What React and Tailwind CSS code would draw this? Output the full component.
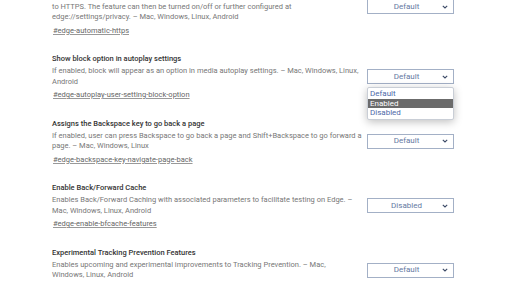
import { useState } from 'react'

const flags = [
  {
    title: 'Automatic HTTPS',
    desc: 'Automatically switch to more secure connections by upgrading navigations\nto HTTPS. The feature can then be turned on/off or further configured at edge://settings/privacy. – Mac, Windows, Linux, Android',
    tag: '#edge-automatic-https',
    value: 'Default',
  },
  {
    title: 'Show block option in autoplay settings',
    desc: 'If enabled, block will appear as an option in media autoplay settings. – Mac, Windows, Linux, Android',
    tag: '#edge-autoplay-user-setting-block-option',
    value: 'Default',
    open: true,
  },
  {
    title: 'Assigns the Backspace key to go back a page',
    desc: 'If enabled, user can press Backspace to go back a page and Shift+Backspace to go forward a page. – Mac, Windows, Linux',
    tag: '#edge-backspace-key-navigate-page-back',
    value: 'Default',
  },
  {
    title: 'Enable Back/Forward Cache',
    desc: 'Enables Back/Forward Caching with associated parameters to facilitate testing on Edge. – Mac, Windows, Linux, Android',
    tag: '#edge-enable-bfcache-features',
    value: 'Disabled',
  },
  {
    title: 'Experimental Tracking Prevention Features',
    desc: 'Enables upcoming and experimental improvements to Tracking Prevention. – Mac,\nWindows, Linux, Android',
    tag: '#edge-experimental-tracking-prevention-features',
    value: 'Default',
  },
]

function Chevron() {
  return (
    <svg className="w-[6px] h-[4px]" viewBox="0 0 6 4" fill="none" stroke="#3c4a66" strokeWidth={1.1}>
      <path d="M0.8 0.8 L3 3 L5.2 0.8" />
    </svg>
  )
}

function FlagSelect({ value, open }) {
  const [hover] = useState('Enabled')
  return (
    <div className="relative shrink-0">
      <div className="w-[87px] h-[15px] border border-[#a3b0c6] bg-white flex items-center pl-[3px] pr-[5px]">
        <span className="flex-1 text-center text-[8px] text-[#6579a2]">{value}</span>
        <Chevron />
      </div>
      {open && (
        <div className="absolute left-0 top-[18px] w-[87px] bg-white border border-[#c9ced6] rounded-[2px] shadow-[0_2px_8px_rgba(0,0,0,0.25)] py-px z-10">
          {['Default', 'Enabled', 'Disabled'].map(o => (
            <div
              key={o}
              className={`h-[9.5px] leading-[9.5px] pl-[2px] text-[8px] ${
                o === hover ? 'bg-[#6b6b6b] text-white' : 'text-[#4d68a8]'
              }`}
            >
              {o}
            </div>
          ))}
        </div>
      )}
    </div>
  )
}

export default function App() {
  return (
    <div
      className="w-[512px] h-[281px] overflow-hidden bg-white"
      style={{ fontFamily: 'Roboto, "Liberation Sans", sans-serif' }}
    >
      <div className="pl-[52px] mt-[-22px] flex flex-col gap-[17.5px]">
        {flags.map(f => (
          <section key={f.tag} className="flex flex-col">
            <h3 className="text-[7.5px] leading-[11px] font-medium text-[#333]">{f.title}</h3>
            <div className="mt-[2px] flex items-center gap-[5px]">
              <p className="w-[310px] whitespace-pre-line text-[7.5px] leading-[10.5px] text-[#777]">{f.desc}</p>
              <FlagSelect value={f.value} open={f.open} />
            </div>
            <a className="mt-[2px] pl-px text-[7.5px] leading-[11px] text-[#666] underline decoration-[#999]">{f.tag}</a>
          </section>
        ))}
      </div>
    </div>
  )
}
